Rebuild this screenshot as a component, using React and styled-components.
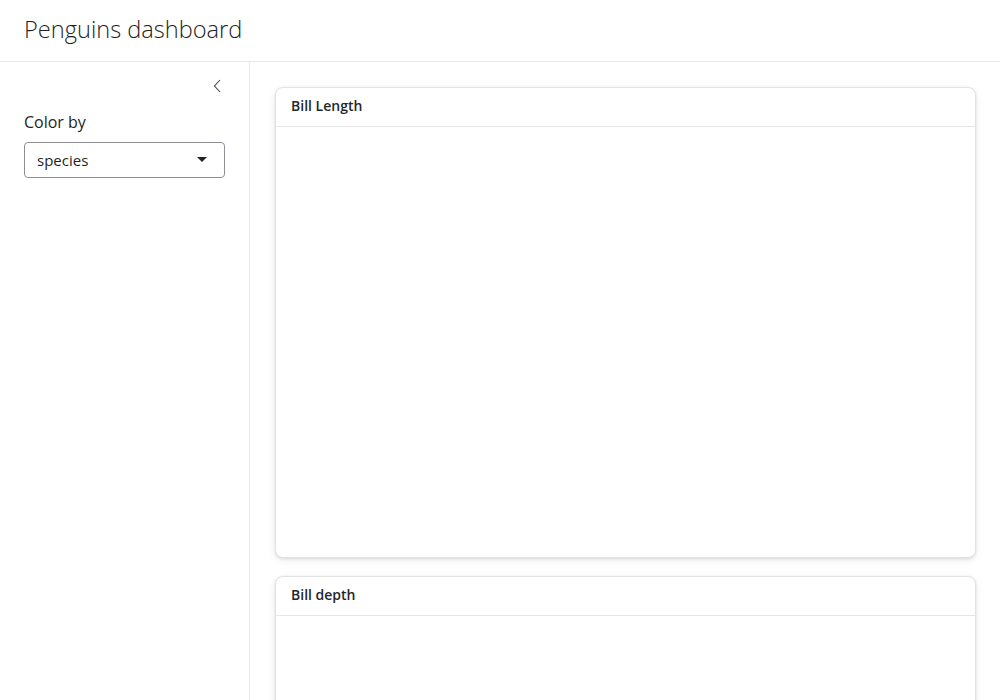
import React from "react"
import styled, { createGlobalStyle } from "styled-components"

const GlobalStyle = createGlobalStyle`
	html, body {
		margin: 0;
		height: 100%;
		background: #fff;
		font-family: "Open Sans", "Liberation Sans", sans-serif;
		color: #1d1f21;
		overflow: hidden;
	}
`

const Page = styled.div`
	display: flex;
	flex-direction: column;
	height: 700px;
	width: 1000px;
`

const Header = styled.header`
	flex: none;
	display: flex;
	align-items: center;
	padding: 0 24px 3px;
	border-bottom: 1px solid #e9e9e9;
	box-sizing: border-box;
	height: 62px;

	h1 {
		margin: 0;
		font-size: 23.6px;
		font-weight: 300;
		color: #1d1f21;
	}
`

const Body = styled.div`
	flex: 1;
	display: flex;
	min-height: 0;
`

const Sidebar = styled.aside`
	width: 250px;
	flex: none;
	border-right: 1px solid #e9e9e9;
	padding: 14px 24px 0;
	box-sizing: border-box;
	display: flex;
	flex-direction: column;
`

const CollapseButton = styled.button`
	align-self: flex-end;
	background: none;
	border: 0;
	padding: 0;
	width: 16px;
	height: 20px;
	display: flex;
	align-items: center;
	justify-content: center;
	color: #444;
	cursor: pointer;
`

const Label = styled.label`
	display: block;
	margin-top: 14px;
	font-size: 16px;
	line-height: 24px;
	color: #1d1f21;
`

const Select = styled.div`
	margin-top: 8px;
	height: 36px;
	border: 1px solid #8d9196;
	border-radius: 4px;
	display: flex;
	align-items: center;
	justify-content: space-between;
	padding: 0 17px 0 12px;
	font-size: 15px;
	color: #1d1f21;
	box-sizing: border-box;
`

const Caret = styled.span`
	width: 0;
	height: 0;
	border-left: 5px solid transparent;
	border-right: 5px solid transparent;
	border-top: 5px solid #222;
	margin-top: -1px;
`

const Main = styled.main`
	flex: 1;
	padding: 25px 24px 0 25px;
	display: flex;
	flex-direction: column;
	gap: 18px;
	overflow: hidden;
`

const Card = styled.section`
	flex: none;
	height: ${ props => props.height }px;
	border: 1px solid #e3e3e3;
	border-radius: 8px;
	box-shadow: 0 1px 3px rgba( 0, 0, 0, .12 ), 0 3px 10px rgba( 0, 0, 0, .06 );
	background: #fff;
	display: flex;
	flex-direction: column;
	box-sizing: border-box;
`

const CardHeader = styled.div`
	height: 39px;
	flex: none;
	display: flex;
	align-items: center;
	padding: 0 15px 4px;
	border-bottom: 1px solid #e6e6e6;
	font-size: 14px;
	font-weight: 600;
	color: #24272a;
	box-sizing: border-box;
`

const App = () => {
	return (
		<Page>
			<GlobalStyle />
			<Header>
				<h1>Penguins dashboard</h1>
			</Header>
			<Body>
				<Sidebar>
					<CollapseButton aria-label="Collapse sidebar">
						<svg width="8" height="14" viewBox="0 0 8 14" fill="none" stroke="currentColor" strokeWidth="1.1">
							<path d="M7 1 L1.5 7 L7 13" />
						</svg>
					</CollapseButton>
					<Label>Color by</Label>
					<Select>
						<span>species</span>
						<Caret />
					</Select>
				</Sidebar>
				<Main>
					<Card height={ 471 }>
						<CardHeader>Bill Length</CardHeader>
					</Card>
					<Card height={ 471 }>
						<CardHeader>Bill depth</CardHeader>
					</Card>
				</Main>
			</Body>
		</Page>
	)
}

export default App
